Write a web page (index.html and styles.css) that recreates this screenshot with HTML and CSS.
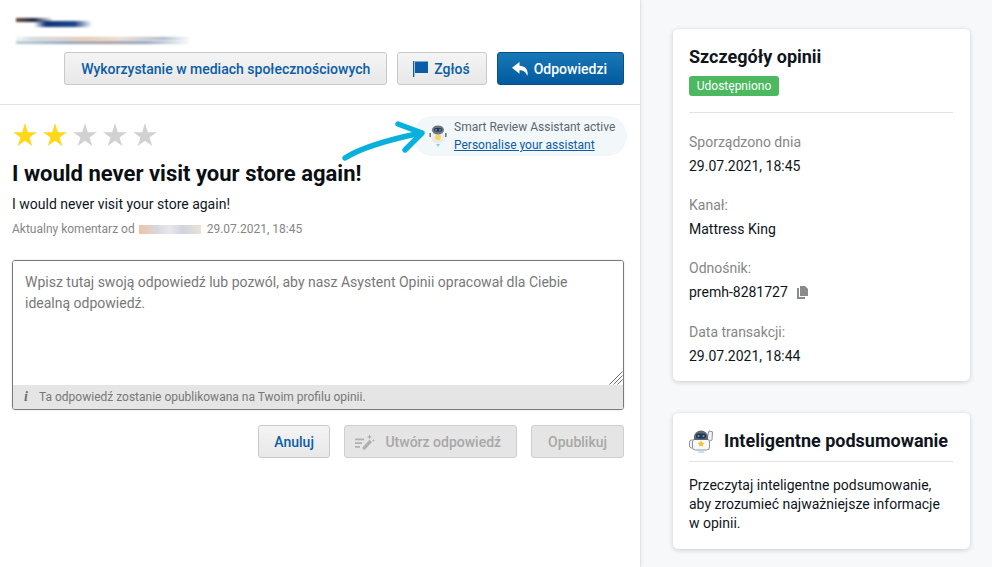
FILE: index.html
```
<!DOCTYPE html>
<html lang="pl">
<head>
<meta charset="utf-8">
<title>Szczegóły opinii</title>
<link rel="stylesheet" href="styles.css">
</head>
<body>
<div class="page">
  <main class="main">
    <header class="head">
      <div class="blur-lines">
        <div class="blur-name"></div>
        <div class="blur-sub"></div>
      </div>
      <div class="actions top-actions">
        <button class="btn">Wykorzystanie w mediach społecznościowych</button>
        <button class="btn btn-flag">
          <svg class="ico-flag" viewBox="0 0 15 16"><path d="M0 0h1.300v16H0z"/><path d="M2 .5h13v11.500H2z"/></svg>Zgłoś
        </button>
        <button class="btn btn-primary">
          <svg class="ico-reply" viewBox="0 0 16 14"><path d="M7.500 0 0 5.800l7.500 6V8.300c3.800 0 6.300 1.400 7.800 5.700 1.400-6.300-1.800-9.700-7.800-10.200z"/></svg>Odpowiedzi
        </button>
      </div>
    </header>

    <section class="review">
      <div class="rating-row">
        <div class="stars">
          <svg class="star on" viewBox="0.6 0 22.8 22.3"><path d="M12 0l2.700 8.900h8.700l-7 5.100 2.650 8.300L12 17.200l-7.050 5.100L7.600 14l-7-5.100h8.700z"/></svg>
          <svg class="star on" viewBox="0.6 0 22.8 22.3"><path d="M12 0l2.700 8.900h8.700l-7 5.100 2.650 8.300L12 17.200l-7.050 5.100L7.600 14l-7-5.100h8.700z"/></svg>
          <svg class="star" viewBox="0.6 0 22.8 22.3"><path d="M12 0l2.700 8.900h8.700l-7 5.100 2.650 8.300L12 17.200l-7.050 5.100L7.600 14l-7-5.100h8.700z"/></svg>
          <svg class="star" viewBox="0.6 0 22.8 22.3"><path d="M12 0l2.700 8.900h8.700l-7 5.100 2.650 8.300L12 17.200l-7.050 5.100L7.600 14l-7-5.100h8.700z"/></svg>
          <svg class="star" viewBox="0.6 0 22.8 22.3"><path d="M12 0l2.700 8.900h8.700l-7 5.100 2.650 8.300L12 17.200l-7.050 5.100L7.600 14l-7-5.100h8.700z"/></svg>
        </div>
        <div class="assistant">
          <svg class="bot" viewBox="0 0 18 22">
            <path d="M.5 8h1.300v4H.5zM16.200 8h1.300v4h-1.300z" fill="#55595f"/>
            <ellipse cx="9" cy="12.500" rx="6.800" ry="6" fill="#e9ebee"/>
            <ellipse cx="9" cy="5" rx="6" ry="4.500" fill="#6a7380"/>
            <rect x="5" y="3" width="8" height="3.600" rx="1.800" fill="#2b3648"/>
            <circle cx="7" cy="4.800" r=".9" fill="#35b9e4"/><circle cx="11" cy="4.800" r=".9" fill="#35b9e4"/>
            <circle cx="9" cy="12.500" r="2.800" fill="#f6d94c"/>
            <path d="M7 19h4l-2 3z" fill="#7fd0ee"/>
          </svg>
          <div class="assistant-text">
            <div>Smart Review Assistant active</div>
            <a href="#">Personalise your assistant</a>
          </div>
        </div>
        <svg class="arrow" viewBox="0 0 84 44" fill="none" stroke="#08b0de" stroke-width="5.400" stroke-linecap="round" stroke-linejoin="round">
          <path d="M3 39C20 28 45 21 79 14"/><path d="M56 5 80 14 63 31"/>
        </svg>
      </div>
      <h1 class="title">I would never visit your store again!</h1>
      <p class="body-text">I would never visit your store again!</p>
      <p class="meta">Aktualny komentarz od <span class="blur-author"></span> 29.07.2021, 18:45</p>

      <div class="reply-box">
        <textarea class="reply-input" placeholder="Wpisz tutaj swoją odpowiedź lub pozwól, aby nasz Asystent Opinii opracował dla Ciebie idealną odpowiedź."></textarea>
        <svg class="resize-grip" viewBox="0 0 14 14" stroke="#6f6f6f" stroke-width="1"><path d="M13.500 .5 .5 13.500M13.500 4.500 4.500 13.500M13.500 8.500 8.500 13.500"/></svg>
        <div class="reply-note"><i class="note-i">i</i>Ta odpowiedź zostanie opublikowana na Twoim profilu opinii.</div>
      </div>

      <div class="actions">
        <button class="btn btn-cancel">Anuluj</button>
        <button class="btn btn-disabled btn-wand">
          <svg class="ico-wand" viewBox="0 0 20 16" fill="#b0b0b0"><path d="M0 4.500h9v1.800H0zM0 8.200h7V10H0zM0 12h5v1.800H0z"/><path d="M7 14l7.500-8.200 2.500 2.300L9.500 16.200z"/><path d="M14.500.5l.8 1.800 1.700.7-1.700.7-.8 1.800-.8-1.800-1.700-.7 1.700-.7zM18.500 5l.5 1 1 .5-1 .5-.5 1-.5-1-1-.5 1-.5z"/></svg>Utwórz odpowiedź
        </button>
        <button class="btn btn-disabled">Opublikuj</button>
      </div>
    </section>
  </main>

  <aside class="side">
    <section class="card details">
      <h2 class="card-title">Szczegóły opinii</h2>
      <span class="badge">Udostępniono</span>
      <hr class="rule">
      <dl class="facts">
        <dt>Sporządzono dnia</dt>
        <dd>29.07.2021, 18:45</dd>
        <dt>Kanał:</dt>
        <dd>Mattress King</dd>
        <dt>Odnośnik:</dt>
        <dd>premh-8281727
          <svg class="ico-copy" viewBox="0 0 12 13" fill="#8a8a8a"><path d="M0 2h2v9h6v2H0z"/><path d="M3 0h5l3 3v7H3z"/></svg>
        </dd>
        <dt>Data transakcji:</dt>
        <dd>29.07.2021, 18:44</dd>
      </dl>
    </section>

    <section class="card summary">
      <div class="summary-head">
        <svg class="bot-lg" viewBox="0 0 25 24">
          <path d="M18 9l2-7 3.500.8-.5 8.200-4 2z" fill="#f0f1f3" stroke="#8f9499"/>
          <rect x=".5" y="11" width="5" height="8" rx="2" fill="#f0f1f3" stroke="#8f9499"/>
          <rect x="3.500" y="10" width="17" height="11" rx="3" fill="#f7f8f9" stroke="#8f9499"/>
          <path d="M5 8a7 6.500 0 0 1 14 0v3H5z" fill="#5f6874"/>
          <rect x="7" y="4.500" width="10" height="5" rx="2" fill="#2b3648"/>
          <circle cx="9.500" cy="7" r="1.100" fill="#31b6e0"/><circle cx="14.500" cy="7" r="1.100" fill="#31b6e0"/>
          <path d="M12 11.500l1.100 2.100 2.300.3-1.700 1.600.4 2.300-2.100-1.100-2.100 1.100.4-2.300-1.700-1.600 2.300-.3z" fill="#f5c02c"/>
          <path d="M9 22.500h6v1H9z" fill="#7fd0ee"/>
        </svg>
        <h2 class="card-title">Inteligentne podsumowanie</h2>
      </div>
      <hr class="rule rule-tight">
      <p class="summary-text">Przeczytaj inteligentne podsumowanie, aby zrozumieć najważniejsze informacje w opinii.</p>
    </section>
  </aside>
</div>
</body>
</html>
```
FILE: styles.css
```
* { box-sizing: border-box; }
html, body { margin: 0; height: 100%; overflow: hidden; }
body { font-family: Roboto, "Liberation Sans", sans-serif; color: #10151c; background: #f6f8f9; }

.page { display: flex; height: 567px; width: 992px; }
.main { width: 641px; background: #fff; border-right: 1px solid #e4e4e4; box-shadow: 0 0 4px rgba(0,0,0,.08); }
.side { flex: 1; padding: 29px 22px 0 32px; display: flex; flex-direction: column; gap: 32px; }

.head { height: 105px; border-bottom: 1px solid #e2e2e2; padding: 17px 16px 0 16px; }
.blur-lines { height: 35px; }
.blur-name {
  width: 76px; height: 10px; filter: blur(1.200px);
  background:
    linear-gradient(90deg, #6b4a30 0, #15233f 50%, rgba(20,35,63,.1) 100%) 0 1px / 36px 4px no-repeat,
    linear-gradient(90deg, rgba(30,60,120,0) 0, #12357a 20%, #1d4488 70%, rgba(60,90,150,0) 100%) 18px 4px / 58px 6px no-repeat;
}
.blur-sub {
  width: 174px; height: 7px; margin-top: 10px; filter: blur(1px);
  background:
    linear-gradient(90deg, rgba(190,210,220,.2) 0, #c9d4dc 10%, #e6c2a6 40%, #e8d8cc 60%, #a8b6c8 85%, rgba(230,240,240,.2) 100%) 0 0 / 100% 3px no-repeat,
    linear-gradient(90deg, #b9c8d6 0, #8da0b8 30%, #a89a98 50%, #8fa2ba 75%, rgba(220,235,240,.2) 100%) 0 4px / 100% 3px no-repeat;
}

.actions { display: flex; justify-content: flex-end; gap: 10px; }
.top-actions { gap: 10px; }
.btn { height: 33px; padding: 0 16px; font: 500 14px/1 Roboto, "Liberation Sans", sans-serif; color: #0a5da6; border: 1px solid #c9c9c9; border-radius: 3px; background: linear-gradient(#f4f4f4, #e8e8e8); display: inline-flex; align-items: center; white-space: nowrap; }
.btn-primary { color: #fff; border-color: #0a4d8c; background: linear-gradient(#1878b6, #025a9f); padding-left: 14px; }
.btn-flag { padding-left: 15px; }
.btn-cancel { padding: 0 15.500px; }
.ico-flag { width: 15px; height: 16px; margin-right: 6px; fill: #0a5da6; }
.ico-reply { width: 16px; height: 14px; margin-right: 6px; fill: #fff; }

.review { padding: 0 16px 0 12px; }
.rating-row { position: relative; display: flex; justify-content: space-between; align-items: flex-start; padding-top: 11px; height: 55px; }
.stars { display: flex; gap: 6px; padding: 7px 0 0 1px; }
.star { width: 24px; height: 23px; fill: #d1d1d1; }
.star.on { fill: #ffd817; }
.assistant { width: 214px; height: 40px; margin-right: -3px; background: #f2f7f9; border-radius: 20px; display: flex; align-items: center; padding-left: 16px; gap: 7px; font-size: 12px; line-height: 18px; color: #5d6670; }
.bot { width: 18px; height: 22px; flex: none; }
.assistant-text a { color: #0a5da6; }
.arrow { position: absolute; left: 330px; top: 14px; width: 84px; height: 44px; }

.title { margin: 0; font-size: 22px; line-height: 28px; font-weight: 700; color: #0b0f14; }
.body-text { margin: 6px 0 0; font-size: 14px; line-height: 20px; }
.meta { margin: 5px 0 0; font-size: 12px; line-height: 20px; color: #868686; display: flex; align-items: center; gap: 4px; }
.blur-author {
  width: 62px; height: 9px; filter: blur(.6px); margin-right: 2px;
  background: linear-gradient(90deg, #eec4a4, #d8d8e0 30%, #e8e8ea 50%, #cfd4de 70%, #ece2d2);
}

.reply-box { position: relative; margin-top: 21px; width: 612px; height: 150px; border: 1px solid #7a7a7a; border-radius: 3px; display: flex; flex-direction: column; overflow: hidden; box-shadow: 0 0 2px rgba(0,0,0,.15); }
.reply-input { flex: 1; display: block; width: 100%; border: 0; outline: 0; resize: none; padding: 11px 12px; font: 14px/21px Roboto, "Liberation Sans", sans-serif; }
.reply-input::placeholder { color: #787878; opacity: 1; }
.resize-grip { position: absolute; right: 0; bottom: 24px; width: 14px; height: 14px; }
.reply-note { height: 24px; flex: none; background: #e5e5e5; font-size: 12px; line-height: 24px; color: #777; padding-left: 11px; display: flex; }
.note-i { width: 15px; font: italic 700 14px/24px "Liberation Serif", serif; color: #6f6f6f; }

.review > .actions { margin-top: 15px; gap: 14px; width: 612px; }
.btn-disabled { color: #a8a8a8; background: #e5e5e5; border-color: #cfcfcf; }
.btn-wand { padding: 0 15px 0 10px; }
.ico-wand { width: 20px; height: 16px; margin-right: 10px; }

.card { width: 297px; background: #fff; border-radius: 5px; padding: 16px 17px 16px 16px; box-shadow: 0 1px 5px rgba(0,0,0,.18); }
.details { height: 352px; }
.summary { height: 136px; }
.card-title { margin: 0; font-size: 18px; line-height: 24px; font-weight: 700; color: #10151c; }
.badge { display: block; width: 90px; height: 20px; margin-top: 7px; background: #4cb860; color: #fff; font-size: 12px; line-height: 20px; text-align: center; border-radius: 3px; }
.rule { border: 0; height: 1px; background: #e2e2e2; margin: 16px 0 0; }
.rule-tight { margin: 4px 0 0; }
.facts { margin: 19px 0 0; font-size: 14px; line-height: 20px; }
.facts dt { color: #868686; }
.facts dd { margin: 4px 0 19.200px; color: #10151c; display: flex; align-items: center; gap: 9px; }
.ico-copy { width: 12px; height: 13px; margin-top: 1px; }

.summary-head { display: flex; align-items: center; gap: 10px; height: 32px; margin-top: -4px; }
.bot-lg { width: 25px; height: 24px; flex: none; }
.summary-text { margin: 14px 0 0; font-size: 14px; line-height: 19px; }
```
